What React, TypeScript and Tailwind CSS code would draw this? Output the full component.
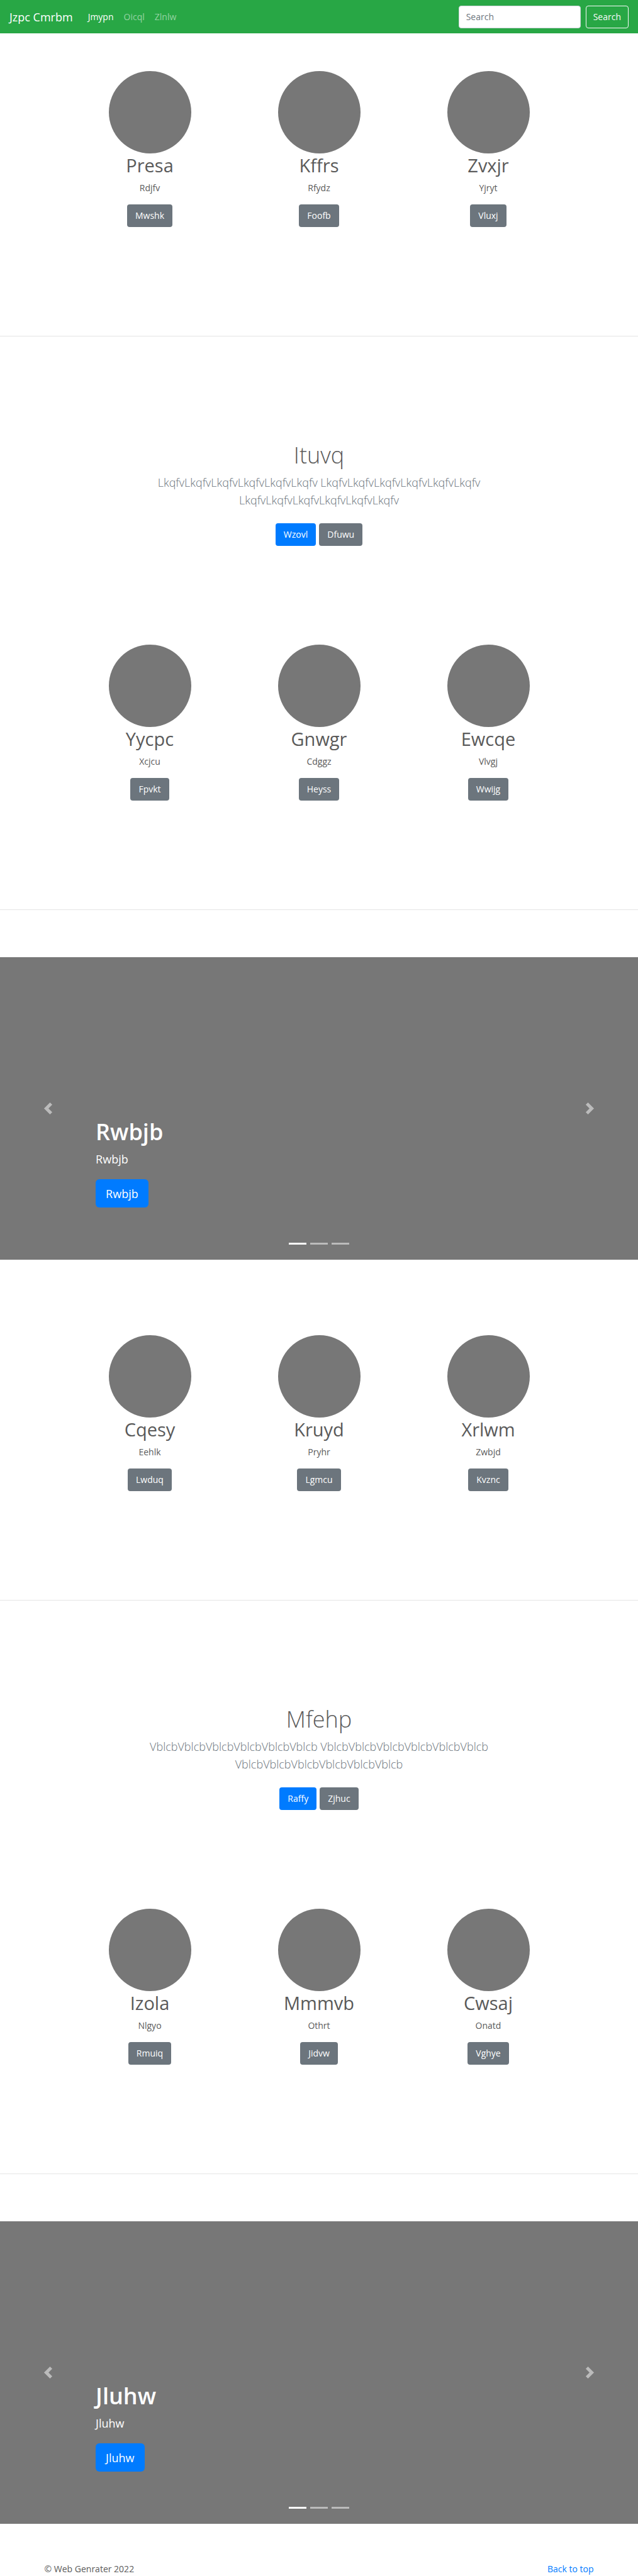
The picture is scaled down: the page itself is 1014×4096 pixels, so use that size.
import React from "react";

type Item = { title: string; text: string; action: string };

const rowOne: Item[] = [
  { title: "Presa", text: "Rdjfv", action: "Mwshk" },
  { title: "Kffrs", text: "Rfydz", action: "Foofb" },
  { title: "Zvxjr", text: "Yjryt", action: "Vluxj" },
];
const rowTwo: Item[] = [
  { title: "Yycpc", text: "Xcjcu", action: "Fpvkt" },
  { title: "Gnwgr", text: "Cdggz", action: "Heyss" },
  { title: "Ewcqe", text: "Vlvgj", action: "Wwijg" },
];
const rowThree: Item[] = [
  { title: "Cqesy", text: "Eehlk", action: "Lwduq" },
  { title: "Kruyd", text: "Pryhr", action: "Lgmcu" },
  { title: "Xrlwm", text: "Zwbjd", action: "Kvznc" },
];
const rowFour: Item[] = [
  { title: "Izola", text: "Nlgyo", action: "Rmuiq" },
  { title: "Mmmvb", text: "Othrt", action: "Jidvw" },
  { title: "Cwsaj", text: "Onatd", action: "Vghye" },
];

function Button({ label, primary = false }: { label: string; primary?: boolean }) {
  return (
    <button
      type="button"
      className={
        primary
          ? "h-9 rounded bg-[#007bff] px-[13px] text-[14px] leading-5 text-white"
          : "h-9 rounded bg-[#6c757d] px-[13px] text-[14px] leading-5 text-white"
      }
    >
      {label}
    </button>
  );
}

function Features({ items }: { items: Item[] }) {
  return (
    <section className="mx-auto grid w-full max-w-[807px] grid-cols-3 pb-[173px]">
      {items.map((item) => (
        <div key={item.title} className="flex flex-col items-center text-center">
          <div className="size-[131px] rounded-full bg-[#777777]" />
          <h2 className="mb-[6px] text-[29px] leading-[38px]">{item.title}</h2>
          <p className="mb-[15px] text-[14px] leading-[22px]">{item.text}</p>
          <Button label={item.action} />
        </div>
      ))}
    </section>
  );
}

function Intro({ title, word, primary, secondary }: { title: string; word: string; primary: string; secondary: string }) {
  const chunk = word.repeat(6);
  return (
    <section className="flex flex-col items-center pt-[165px] pb-[157px] text-center">
      <h1 className="mb-[6px] text-[36px] font-light leading-[47px]">{title}</h1>
      <p className="mb-[23px] max-w-[600px] text-[18px] font-light leading-7 text-[#6c757d]">
        {chunk} {chunk} {chunk}
      </p>
      <div className="flex gap-[5px]">
        <Button label={primary} primary />
        <Button label={secondary} />
      </div>
    </section>
  );
}

function Carousel({ word }: { word: string }) {
  return (
    <section className="relative flex h-[481px] flex-col items-start justify-end bg-[#777777] px-[15%] pb-[83px] text-white">
      <h1 className="mb-[6px] text-[36px] font-semibold leading-[47px]">{word}</h1>
      <p className="mb-[18px] text-[18px] leading-7">{word}</p>
      <button type="button" className="h-[45px] rounded-md bg-[#007bff] px-4 text-[18px] leading-7">
        {word}
      </button>
      <button
        type="button"
        aria-label="Previous"
        className="absolute inset-y-0 left-0 flex w-[15%] items-center justify-center opacity-50"
      >
        <svg viewBox="0 0 8 8" className="size-[19px] fill-white">
          <path d="M5.25 0l-4 4 4 4 1.5-1.5L4.25 4l2.5-2.5L5.25 0z" />
        </svg>
      </button>
      <button
        type="button"
        aria-label="Next"
        className="absolute inset-y-0 right-0 flex w-[15%] items-center justify-center opacity-50"
      >
        <svg viewBox="0 0 8 8" className="size-[19px] fill-white">
          <path d="M2.75 0l-1.5 1.5L3.75 4l-2.5 2.5L2.75 8l4-4-4-4z" />
        </svg>
      </button>
      <div className="absolute inset-x-0 bottom-6 flex justify-center gap-[6px]">
        <button type="button" aria-label="Slide 1" className="h-[3px] w-7 bg-white" />
        <button type="button" aria-label="Slide 2" className="h-[3px] w-7 bg-white opacity-50" />
        <button type="button" aria-label="Slide 3" className="h-[3px] w-7 bg-white opacity-50" />
      </div>
    </section>
  );
}

export default function App() {
  return (
    <div className="bg-white font-['Open_Sans','Noto_Sans',sans-serif] text-[#5a5a5a]">
      <header className="flex h-[53px] items-center bg-[#28a745] px-[15px] text-[14px]">
        <a href="#" className="mr-6 text-[18px] leading-7 text-white">Jzpc Cmrbm</a>
        <nav className="flex grow gap-4">
          <a href="#" className="text-white">Jmypn</a>
          <a href="#" className="text-white/50">Oicql</a>
          <a href="#" className="text-white/50">Zlnlw</a>
        </nav>
        <form className="flex gap-2" onSubmit={(e) => e.preventDefault()}>
          <input
            type="text"
            aria-label="Search"
            placeholder="Search"
            className="h-9 w-[194px] rounded border border-[#ced4da] bg-white px-[11px] text-[#495057] placeholder:text-[#6c757d]"
          />
          <button type="submit" className="h-9 rounded border border-[#f8f9fa] px-[11px] text-[#f8f9fa]">
            Search
          </button>
        </form>
      </header>
      <main>
        <div className="pt-[60px]">
          <Features items={rowOne} />
        </div>
        <hr className="border-[#e5e5e5]" />
        <Intro title="Ituvq" word="Lkqfv" primary="Wzovl" secondary="Dfuwu" />
        <Features items={rowTwo} />
        <hr className="mb-[75px] border-[#e5e5e5]" />
        <Carousel word="Rwbjb" />
        <div className="pt-[120px]">
          <Features items={rowThree} />
        </div>
        <hr className="border-[#e5e5e5]" />
        <Intro title="Mfehp" word="Vblcb" primary="Raffy" secondary="Zjhuc" />
        <Features items={rowFour} />
        <hr className="mb-[75px] border-[#e5e5e5]" />
        <Carousel word="Jluhw" />
      </main>
      <footer className="mx-auto flex max-w-[873px] justify-between pt-[61px] text-[14px] leading-[22px]">
        <p>© Web Genrater 2022</p>
        <a href="#" className="text-[#007bff]">Back to top</a>
      </footer>
    </div>
  );
}
